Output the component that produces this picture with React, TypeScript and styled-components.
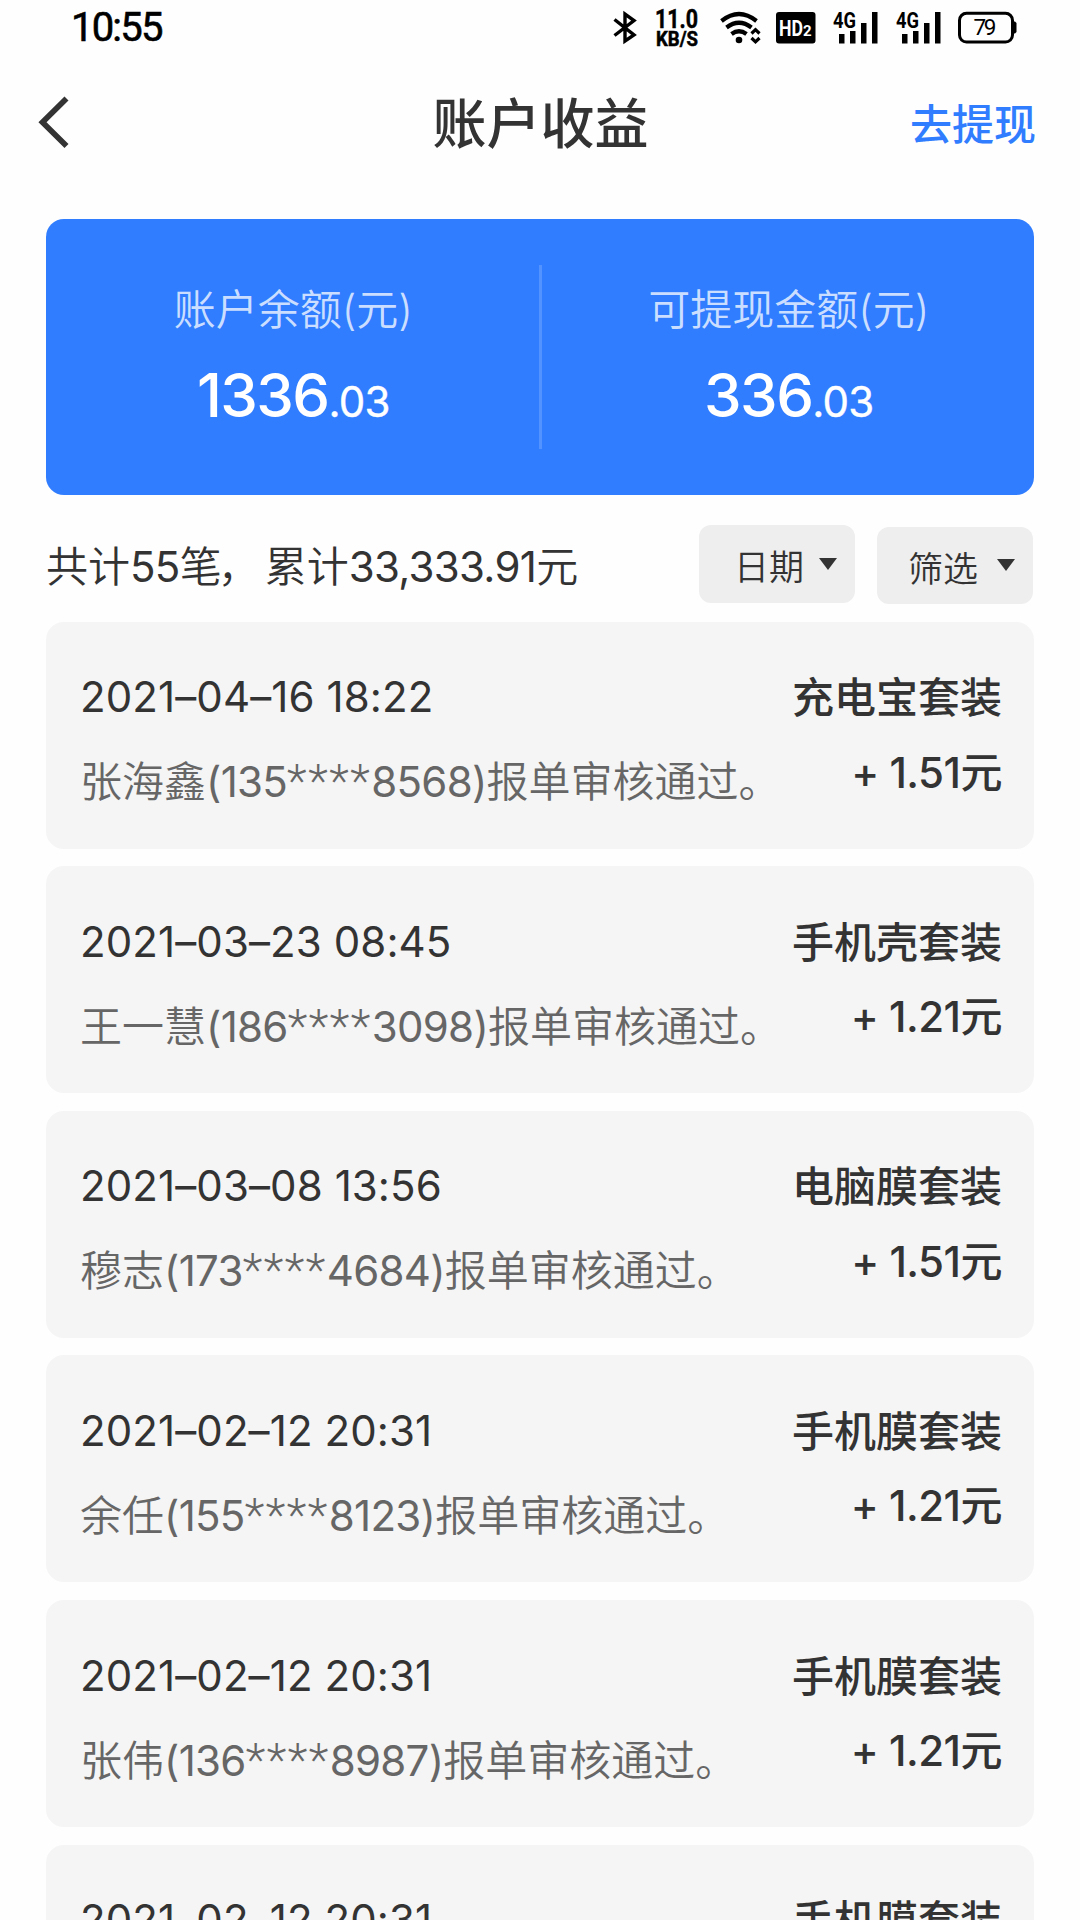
import React from 'react';
import styled, { createGlobalStyle } from 'styled-components';

const BLUE = '#307dff';
const INK = '#333333';

const GlobalStyle = createGlobalStyle`
  * { box-sizing: border-box; }
  body {
    margin: 0;
    background: #fefefe;
    color: ${INK};
    font-family: Inter, 'Noto Sans CJK SC', sans-serif;
    font-weight: 350;
    font-feature-settings: 'calt' 0;
    -webkit-font-smoothing: antialiased;
  }
`;

const Screen = styled.main`
  width: 1080px;
  height: 1920px;
  overflow: hidden;
  display: flex;
  flex-direction: column;
`;

const StatusBar = styled.div`
  height: 56px;
  flex: none;
  display: flex;
  justify-content: space-between;
  padding: 0 62px 0 71px;
`;

const Clock = styled.span`
  font: 400 40px/56px Roboto, sans-serif;
  letter-spacing: -1.8px;
  -webkit-text-stroke: 0.6px #000;
  color: #000;
`;

const StatusIcons = styled.div`
  display: flex;
`;

const Glyph = styled.svg<{ $gap?: number }>`
  display: block;
  flex: none;
  overflow: visible;
  margin-left: ${(p) => p.$gap ?? 0}px;
`;

const NavBar = styled.header`
  height: 132px;
  flex: none;
  display: grid;
  grid-template-columns: 1fr auto 1fr;
  align-items: center;
  padding: 0 44px 0 35px;
`;

const BackButton = styled.button`
  border: 0;
  padding: 0;
  background: none;
  width: 40px;
  height: 60px;
`;

const PageTitle = styled.h1`
  margin: 0;
  padding: 6px 0 0 10px;
  font-size: 54px;
  line-height: 80px;
  font-weight: 500;
`;

const WithdrawLink = styled.a`
  justify-self: end;
  padding-top: 6px;
  font-size: 42px;
  line-height: 60px;
  font-weight: 500;
  color: ${BLUE};
`;

const BalanceCard = styled.section`
  margin: 30.7px 46px 0;
  height: 276.3px;
  flex: none;
  display: flex;
  align-items: center;
  border-radius: 18px;
  background: ${BLUE};
  color: #fff;
`;

const Divider = styled.div`
  width: 3px;
  height: 184px;
  background: rgba(255, 255, 255, 0.17);
`;

const Balance = styled.div`
  flex: 1;
  height: 100%;
  display: flex;
  flex-direction: column;
  align-items: center;
  padding: 61.5px 0 0 2px;
`;

const BalanceLabel = styled.div`
  font-size: 42px;
  line-height: 60px;
  color: rgba(255, 255, 255, 0.77);
`;

const BalanceValue = styled.div`
  margin-top: 15px;
  font-size: 60px;
  line-height: 80px;
  font-weight: 500;
  letter-spacing: -1.6px;
`;

const Cents = styled.span`
  font-size: 42px;
  font-weight: 400;
  letter-spacing: -0.8px;
  -webkit-text-stroke: 0.4px #fff;
`;

const SummaryRow = styled.div`
  height: 126.7px;
  flex: none;
  display: flex;
  align-items: flex-start;
  padding: 0 47px 0 46px;
`;

const Summary = styled.div`
  flex: 1;
  margin-top: 42px;
  font-size: 42px;
  line-height: 60px;
  white-space: nowrap;
`;

const Comma = styled.span`
  margin: 0 5px 0 -4px;
`;

const FilterButton = styled.button<{ $top: number; $height: number; $gap?: number; $caretGap: number }>`
  margin: ${(p) => p.$top}px 0 0 ${(p) => p.$gap ?? 0}px;
  width: 156px;
  height: ${(p) => p.$height}px;
  display: flex;
  align-items: center;
  justify-content: flex-end;
  gap: ${(p) => p.$caretGap}px;
  border: 0;
  border-radius: 12px;
  padding: 0 18px 0 0;
  background: #eeeeee;
  color: ${INK};
  font: inherit;
  font-size: 35px;
  line-height: 50px;
`;

const FilterLabel = styled.span`
  padding-top: 7px;
`;

const List = styled.ul`
  margin: 0;
  padding: 0 46px;
  list-style: none;
  display: flex;
  flex-direction: column;
  gap: 17.6px;
`;

const Record = styled.li`
  height: 227px;
  flex: none;
  display: flex;
  justify-content: space-between;
  padding: 45.5px 32px 0 34px;
  border-radius: 18px;
  background: #f5f5f5;
  font-size: 42px;
  line-height: 60px;
  white-space: nowrap;
`;

const Column = styled.div<{ $gap: number; $end?: boolean }>`
  display: flex;
  flex-direction: column;
  align-items: ${(p) => (p.$end ? 'flex-end' : 'flex-start')};
  gap: ${(p) => p.$gap}px;
`;

const Timestamp = styled.time`
  font-weight: 400;
  letter-spacing: 0.1px;
`;

const Note = styled.div`
  color: #666666;
`;

const Digits = styled.span`
  font-weight: 400;
  letter-spacing: -0.7px;
`;

const Mask = styled.span`
  font-family: Roboto, sans-serif;
  font-size: 46px;
  font-weight: 300;
  line-height: 1;
  letter-spacing: 1.5px;
`;

const Product = styled.div`
  padding-top: 1px;
  font-weight: 500;
`;

const Amount = styled.div`
  font-weight: 500;
  letter-spacing: -0.5px;
`;

const records = [
  { time: '2021–04–16 18:22', name: '张海鑫', head: '135', tail: '8568', product: '充电宝套装', amount: '1.51' },
  { time: '2021–03–23 08:45', name: '王一慧', head: '186', tail: '3098', product: '手机壳套装', amount: '1.21' },
  { time: '2021–03–08 13:56', name: '穆志', head: '173', tail: '4684', product: '电脑膜套装', amount: '1.51' },
  { time: '2021–02–12 20:31', name: '余任', head: '155', tail: '8123', product: '手机膜套装', amount: '1.21' },
  { time: '2021–02–12 20:31', name: '张伟', head: '136', tail: '8987', product: '手机膜套装', amount: '1.21' },
  { time: '2021–02–12 20:31', name: '张伟', head: '136', tail: '8987', product: '手机膜套装', amount: '1.21' },
];

const Bluetooth = () => (
  <Glyph width="24" height="56" viewBox="0 0 24 56" fill="none" stroke="#000" strokeWidth="3.4">
    <path d="M1.5 19.5 L21 35 L12 41 V14 L21 20.5 L1.5 35.5" />
  </Glyph>
);

const NetSpeed = () => (
  <Glyph $gap={18} width="44" height="56" viewBox="0 0 44 56" fontFamily="Roboto, sans-serif" fontWeight="700" stroke="#000" strokeWidth=".5">
    <text x="0" y="28" fontSize="25.5" textLength="43" lengthAdjust="spacingAndGlyphs">11.0</text>
    <text x="1" y="45.5" fontSize="19.5" textLength="42" lengthAdjust="spacingAndGlyphs">KB/S</text>
  </Glyph>
);

const Wifi = () => (
  <Glyph $gap={21} width="41" height="56" viewBox="0 0 41 56" fill="none" stroke="#000" strokeWidth="4.2">
    <path d="M1.5 21 Q19 7 36.5 21" />
    <path d="M6.5 27.5 Q19 18 31.5 27.5" />
    <path d="M11.5 34 Q19 28.5 26.5 34" />
    <circle cx="19" cy="40" r="3.3" fill="#000" stroke="none" />
    <path d="M31.5 33.5 L35.5 29.7 L39.5 33.5 M31.5 38 L35.5 41.8 L39.5 38" strokeWidth="3.2" />
  </Glyph>
);

const HdBadge = () => (
  <Glyph $gap={15} width="40" height="56" viewBox="0 0 40 56" fill="#fff" fontFamily="Roboto, sans-serif" fontWeight="700">
    <rect x="0" y="12" width="39.5" height="31.5" rx="3" fill="#000" />
    <text x="3" y="36" fontSize="22.5" textLength="24" lengthAdjust="spacingAndGlyphs">
      HD
    </text>
    <text x="27" y="35.5" fontSize="15">
      2
    </text>
  </Glyph>
);

const Signal = ({ gap }: { gap: number }) => (
  <Glyph $gap={gap} width="45" height="56" viewBox="0 0 45 56" fontFamily="Roboto, sans-serif" fontWeight="700">
    <text x="0" y="27.8" fontSize="22" textLength="23" lengthAdjust="spacingAndGlyphs">4G</text>
    <path d="M6 34h5.5v9.5h-5.5z M17 31h5.5v12.5h-5.5z M28 23h5.5v20.5h-5.5z M39 12h5.5v31.5h-5.5z" />
  </Glyph>
);

const Battery = () => (
  <Glyph $gap={17} width="60" height="56" viewBox="0 0 60 56">
    <rect x="1.5" y="13.3" width="53" height="28.8" rx="7" fill="none" stroke="#000" strokeWidth="3" />
    <path d="M55.5 21.5h1.5l1.5 1.5v9l-1.5 1.5h-1.5z" />
    <text x="15.5" y="35.2" fontSize="22.5" textLength="23" fontFamily="Roboto, sans-serif" fontWeight="400">79</text>
  </Glyph>
);

const Caret = () => (
  <svg width="18" height="12" viewBox="0 0 18 12">
    <path d="M0 0H18L9 12Z" fill={INK} />
  </svg>
);

export default function App() {
  return (
    <Screen>
      <GlobalStyle />
      <StatusBar>
        <Clock>10:55</Clock>
        <StatusIcons>
          <Bluetooth />
          <NetSpeed />
          <Wifi />
          <HdBadge />
          <Signal gap={17} />
          <Signal gap={18} />
          <Battery />
        </StatusIcons>
      </StatusBar>
      <NavBar>
        <BackButton aria-label="返回">
          <svg width="40" height="60" viewBox="0 0 40 60" fill="none" stroke={INK} strokeWidth="5.7">
            <path d="M31.5 6.5 L7.5 30.2 L31.5 54" />
          </svg>
        </BackButton>
        <PageTitle>账户收益</PageTitle>
        <WithdrawLink>去提现</WithdrawLink>
      </NavBar>
      <BalanceCard>
        <Balance>
          <BalanceLabel>账户余额(元)</BalanceLabel>
          <BalanceValue>1336<Cents>.03</Cents></BalanceValue>
        </Balance>
        <Divider />
        <Balance>
          <BalanceLabel>可提现金额(元)</BalanceLabel>
          <BalanceValue>336<Cents>.03</Cents></BalanceValue>
        </Balance>
      </BalanceCard>
      <SummaryRow>
        <Summary>
          共计<Digits>55</Digits>笔<Comma>，</Comma>累计<Digits>33,333.91</Digits>元
        </Summary>
        <FilterButton $top={30} $height={78} $caretGap={15}>
          <FilterLabel>日期</FilterLabel>
          <Caret />
        </FilterButton>
        <FilterButton $top={32} $height={77} $gap={22} $caretGap={19}>
          <FilterLabel>筛选</FilterLabel>
          <Caret />
        </FilterButton>
      </SummaryRow>
      <List>
        {records.map((r, i) => (
          <Record key={i}>
            <Column $gap={25}>
              <Timestamp>{r.time}</Timestamp>
              <Note>
                {r.name}<Digits>({r.head}</Digits><Mask>****</Mask><Digits>{r.tail})</Digits>报单审核通过。
              </Note>
            </Column>
            <Column $gap={14.5} $end>
              <Product>{r.product}</Product>
              <Amount>+ {r.amount}元</Amount>
            </Column>
          </Record>
        ))}
      </List>
    </Screen>
  );
}
